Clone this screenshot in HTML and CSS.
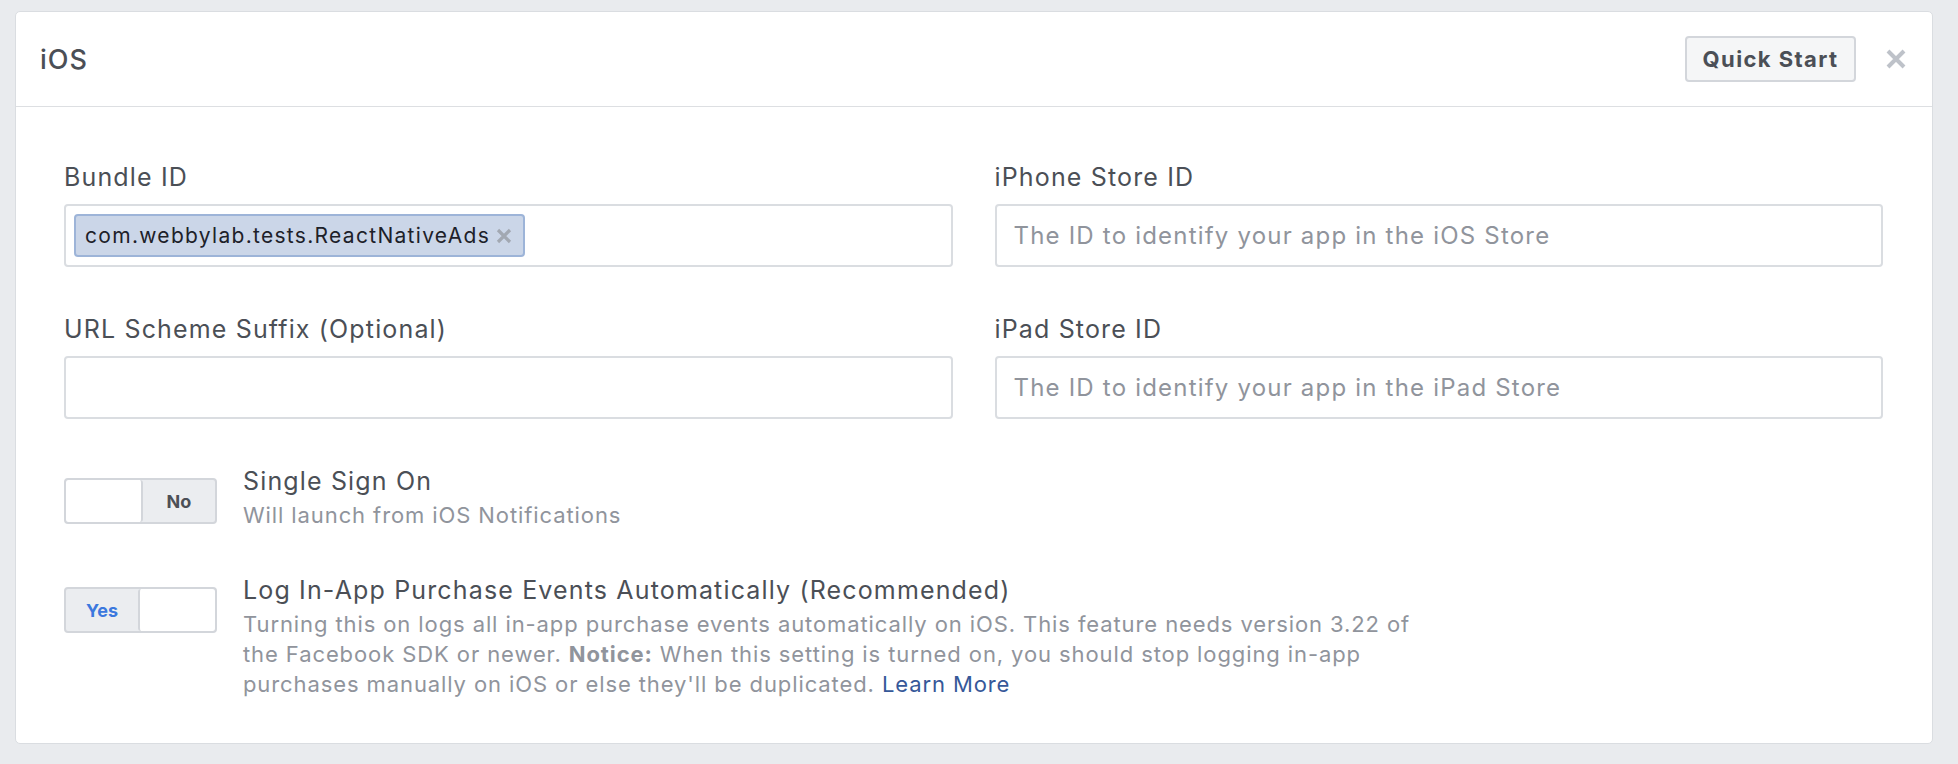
FILE: index.html
```html
<!DOCTYPE html>
<html lang="en">
<head>
<meta charset="utf-8">
<title>iOS settings</title>
<link rel="stylesheet" href="styles.css">
</head>
<body>
<div class="panel">
  <div class="panel-header">
    <h2 class="panel-title">iOS</h2>
    <div class="header-actions">
      <button class="btn" type="button">Quick Start</button>
      <button class="close" type="button" aria-label="Close">
        <svg width="20" height="20" viewBox="0 0 20 20"><path d="M2 2 L18 18 M18 2 L2 18" stroke="#bec2c9" stroke-width="4" stroke-linecap="butt"/></svg>
      </button>
    </div>
  </div>
  <div class="panel-body">
    <div class="fields">
      <div class="field">
        <label class="field-label">Bundle ID</label>
        <div class="input">
          <span class="token">com.webbylab.tests.ReactNativeAds<svg class="token-x" width="16" height="16" viewBox="0 0 16 16"><path d="M2 2 L14 14 M14 2 L2 14" stroke="#a2a8b2" stroke-width="3.2"/></svg></span>
        </div>
      </div>
      <div class="field">
        <label class="field-label">iPhone Store ID</label>
        <div class="input"><span class="placeholder">The ID to identify your app in the iOS Store</span></div>
      </div>
      <div class="field">
        <label class="field-label">URL Scheme Suffix (Optional)</label>
        <div class="input"></div>
      </div>
      <div class="field">
        <label class="field-label">iPad Store ID</label>
        <div class="input"><span class="placeholder">The ID to identify your app in the iPad Store</span></div>
      </div>
    </div>

    <div class="switch-row">
      <div class="toggle toggle-off">
        <span class="knob"></span>
        <span class="toggle-text">No</span>
      </div>
      <div class="switch-info">
        <div class="switch-title">Single Sign On</div>
        <div class="switch-desc">Will launch from iOS Notifications</div>
      </div>
    </div>

    <div class="switch-row">
      <div class="toggle toggle-on">
        <span class="toggle-text">Yes</span>
        <span class="knob"></span>
      </div>
      <div class="switch-info">
        <div class="switch-title">Log In-App Purchase Events Automatically (Recommended)</div>
        <div class="switch-desc">Turning this on logs all in-app purchase events automatically on iOS. This feature needs version 3.22 of<br>the Facebook SDK or newer. <b>Notice:</b> When this setting is turned on, you should stop logging in-app<br>purchases manually on iOS or else they'll be duplicated. <a class="link" href="#">Learn More</a></div>
      </div>
    </div>
  </div>
</div>
</body>
</html>
```
FILE: styles.css
```css
* { box-sizing: border-box; }
html, body { margin: 0; }
body {
  background: #e9ebee;
  padding: 11px 25px 20px 15px;
  font-family: "Inter", "Liberation Sans", sans-serif;
  color: #4b4f56;
}
.panel {
  background: #fff;
  border: 1px solid #dadde1;
  border-radius: 5px;
}
.panel-header {
  height: 95px;
  border-bottom: 1px solid #dddfe2;
  display: flex;
  align-items: center;
  justify-content: space-between;
  padding: 0 26px 0 24px;
}
.panel-title {
  margin: 0;
  font-size: 27px;
  font-weight: 500;
  letter-spacing: 1px;
  color: #4b4f56;
}
.header-actions {
  display: flex;
  align-items: center;
  gap: 30px;
}
.btn {
  height: 46px;
  width: 171px;
  background: #f5f6f7;
  border: 2px solid #d3d6db;
  border-radius: 4px;
  font-family: inherit;
  font-size: 22px;
  font-weight: 700;
  letter-spacing: 1.4px;
  color: #4b4f56;
  padding: 0;
}
.close {
  background: none;
  border: 0;
  padding: 0;
  width: 20px;
  height: 20px;
  display: flex;
}
.panel-body {
  padding: 55px 49px 44px 48px;
}
.fields {
  display: grid;
  grid-template-columns: 1fr 1fr;
  column-gap: 42px;
  row-gap: 47px;
}
.field-label {
  display: block;
  font-size: 25px;
  letter-spacing: 1.15px;
  line-height: 30px;
  margin-bottom: 12px;
  color: #4b4f56;
}
.input {
  height: 63px;
  border: 2px solid #dadde1;
  border-radius: 4px;
  display: flex;
  align-items: center;
  padding: 0 8px;
}
.placeholder {
  padding-left: 9px;
  font-size: 24px;
  letter-spacing: 1.2px;
  color: #90949c;
}
.token {
  display: inline-flex;
  align-items: center;
  height: 43px;
  padding: 0 11px 0 9px;
  background: #cbd6e8;
  border: 2px solid #9db4d8;
  border-radius: 4px;
  font-size: 21px;
  letter-spacing: 1.3px;
  color: #1d2129;
  gap: 6px;
}
.token-x { display: block; }
.switch-row {
  display: flex;
  align-items: flex-start;
  gap: 26px;
  margin-top: 45px;
}
.fields + .switch-row { margin-top: 47px; }
.toggle {
  flex: none;
  margin-top: 12px;
  width: 153px;
  height: 46px;
  border: 2px solid #d3d6db;
  border-radius: 4px;
  background: #ebedf0;
  display: flex;
  overflow: hidden;
}
.knob {
  width: 77px;
  background: #fff;
  border-radius: 3px;
}
.toggle-off .knob { border-right: 2px solid #d3d6db; }
.toggle-on .knob { border-left: 2px solid #d3d6db; }
.toggle-text {
  flex: 1;
  display: flex;
  align-items: center;
  justify-content: center;
  font-size: 18px;
  font-weight: 700;
  color: #4b4f56;
}
.toggle-on .toggle-text { color: #3b78de; }
.switch-title {
  font-size: 25px;
  letter-spacing: 1.15px;
  line-height: 30px;
  margin-bottom: 4px;
  color: #4b4f56;
}
.switch-desc {
  font-size: 22px;
  letter-spacing: 0.9px;
  line-height: 30px;
  color: #90949c;
}
.switch-desc b { font-weight: 700; }
.link {
  color: #365899;
  text-decoration: none;
}
```
